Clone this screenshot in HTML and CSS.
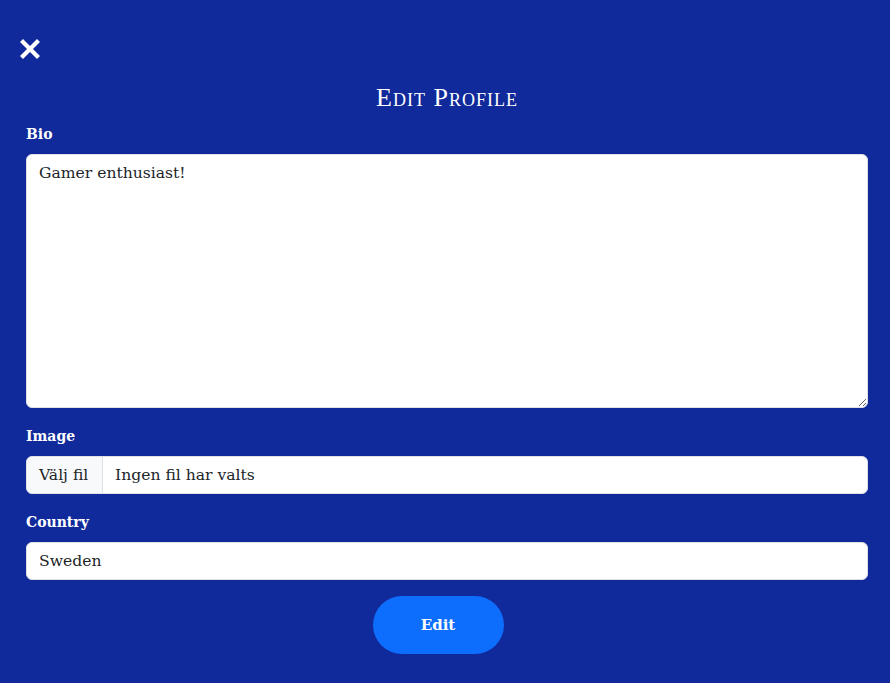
FILE: index.html
```html
<!DOCTYPE html>
<html lang="sv">
<head>
<meta charset="utf-8">
<title>Edit Profile</title>
<link rel="stylesheet" href="styles.css">
</head>
<body>
<div class="page">
  <div class="top">
    <button class="close" aria-label="Close">
      <svg width="20" height="20" viewBox="0 0 20 20"><path d="M3 3 L17 17 M17 3 L3 17" stroke="#fff" stroke-width="4.2" stroke-linecap="square"/></svg>
    </button>
  </div>
  <h1 class="title">Edit Profile</h1>
  <form class="form">
    <div class="field">
      <label class="label">Bio</label>
      <textarea class="control textarea">Gamer enthusiast!</textarea>
    </div>
    <div class="field">
      <label class="label">Image</label>
      <div class="control file">
        <span class="file-btn">Välj fil</span>
        <span class="file-name">Ingen fil har valts</span>
      </div>
    </div>
    <div class="field">
      <label class="label">Country</label>
      <input class="control" type="text" value="Sweden">
    </div>
    <div class="actions">
      <button type="button" class="submit">Edit</button>
    </div>
  </form>
</div>
</body>
</html>
```
FILE: styles.css
```css
* { box-sizing: border-box; }
html, body {
  margin: 0;
  padding: 0;
  background: #10299b;
  height: 100%;
}
body {
  font-family: "DejaVu Serif", "Liberation Serif", serif;
  color: #fff;
}
.page {
  padding: 0 22px 0 26px;
}
.top {
  height: 60px;
  padding-top: 39px;
  margin-left: -6px;
}
.close {
  background: none;
  border: 0;
  padding: 0;
  width: 20px;
  height: 20px;
  display: block;
  cursor: pointer;
}
.title {
  margin: 0;
  height: 62px;
  padding-top: 23px;
  font-family: "Liberation Serif", serif;
  font-variant: small-caps;
  font-weight: normal;
  font-size: 26px;
  line-height: 30px;
  text-align: center;
  letter-spacing: 1px;
}
.form {
  display: flex;
  flex-direction: column;
}
.field {
  display: flex;
  flex-direction: column;
  margin-bottom: 16px;
}
.label {
  font-weight: bold;
  font-size: 14px;
  line-height: 24px;
  margin-bottom: 8px;
}
.control {
  font-family: "DejaVu Serif", "Liberation Serif", serif;
  font-size: 15.6px;
  color: #212529;
  background: #fff;
  border: 1px solid #dee2e6;
  border-radius: 6px;
  height: 38px;
  padding: 6px 12px;
  line-height: 24px;
  width: 100%;
}
.textarea {
  height: 254px;
  resize: vertical;
  padding-top: 6px;
}
.file {
  display: flex;
  padding: 0;
  overflow: hidden;
}
.file-btn {
  background: #f8f9fa;
  border-right: 1px solid #dee2e6;
  padding: 6px 12px;
  width: 76px;
}
.file-name {
  padding: 6px 12px;
}
.actions {
  display: flex;
  justify-content: center;
  padding-right: 18px;
}
.submit {
  width: 131px;
  height: 58px;
  border: 0;
  border-radius: 29px;
  background: #0d6efd;
  color: #fff;
  font-family: "DejaVu Serif", serif;
  font-weight: bold;
  font-size: 15px;
}
```
